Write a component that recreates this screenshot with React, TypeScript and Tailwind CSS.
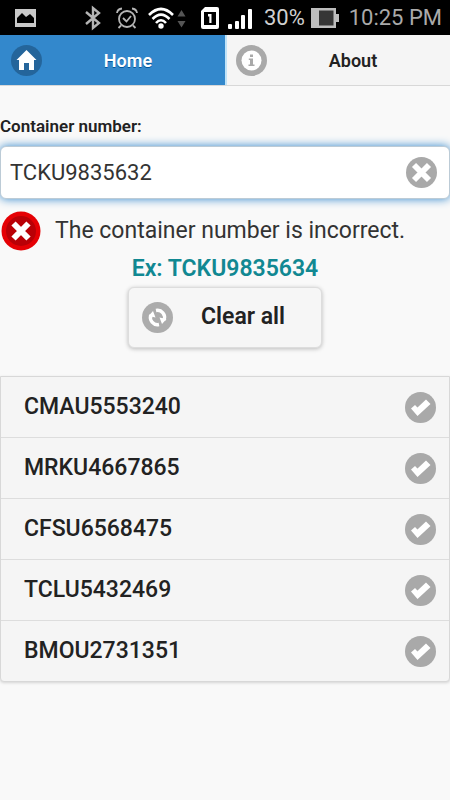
import React, { useState } from "react";

const containers = [
  "CMAU5553240",
  "MRKU4667865",
  "CFSU6568475",
  "TCLU5432469",
  "BMOU2731351",
];

function StatusBar() {
  return (
    <header className="flex h-[35px] items-center bg-black pl-[15px] pr-2 text-[#d0d0d0]">
      {/* Picture */}
      <svg viewBox="0 0 21 18" className="h-[18px] w-[21px]">
        <path d="M0 0h21v18H0z" fill="#c9c9c9" />
        <path d="M2 14V9l5-5 4 4 4-3 4 4v5z" fill="#000" />
      </svg>
      {/* Bluetooth */}
      <svg viewBox="0 0 16 26" className="ml-[49px] h-[26px] w-4" fill="none" stroke="#b5b5b5" strokeWidth="2.4">
        <path d="M1 7l13 11-6 5V3l6 5L1 19" />
      </svg>
      {/* Alarm */}
      <svg viewBox="0 0 22 22" className="ml-[15px] h-[22px] w-[22px]" fill="none" stroke="#b5b5b5" strokeWidth="1.8">
        <circle cx="11" cy="12" r="8" />
        <path d="M7 11l3.5 3.5L15 9M5 18.5l-2.5 2.5M17 18.5l2.5 2.5M1 6Q1.500 2 6 1.500M21 6Q20.500 2 16 1.500" />
      </svg>
      {/* Wi-Fi and traffic arrows */}
      <svg viewBox="0 0 38 22" className="ml-2.5 h-[22px] w-[38px]">
        <g fill="none" stroke="#fff" strokeWidth="2.600">
          <path d="M1 8Q13-4 25 8" />
          <path d="M4.500 12Q13 3.500 21.500 12" />
          <path d="M8 16Q13 10.500 18 16" />
        </g>
        <circle cx="13" cy="19" r="2.700" fill="#fff" />
        <path d="M29.500 9.500l4-6.500 4 6.500zM29.500 14l4 6.500 4-6.500z" fill="#555" />
      </svg>
      {/* SIM */}
      <svg viewBox="0 0 18 22" className="ml-[15px] h-[22px] w-[18px]">
        <path d="M4 0h12q2 0 2 2v18q0 2-2 2H2q-2 0-2-2V4z" fill="#fff" />
        <path d="M3 5h12v13H3z" fill="#000" />
        <path d="M7 7h3.500v9H8.300V9.500H7z" fill="#fff" />
      </svg>
      {/* Signal */}
      <svg viewBox="0 0 24 20" className="ml-[9px] mt-0.5 h-5 w-6" fill="#fff">
        <rect y="15" width="4" height="5" rx="1" />
        <rect x="7" y="12" width="4" height="8" rx="1" />
        <rect x="13" y="6" width="4" height="14" rx="1" />
        <rect x="20" width="4" height="20" rx="1" />
      </svg>
      <span className="ml-3 text-[22px] leading-none">30%</span>
      {/* Battery */}
      <svg viewBox="0 0 28 20" className="ml-1.5 h-5 w-7">
        <path d="M0 0h25v6h3v8h-3v6H0z" fill="#bdbdbd" />
        <path d="M8 2.500h14.500v15H8z" fill="#363636" />
      </svg>
      <time className="ml-auto whitespace-nowrap text-[22px] leading-none text-[#aaa]">10:25 PM</time>
    </header>
  );
}

function HomeIcon() {
  return (
    <svg viewBox="0 0 31 31" className="h-[31px] w-[31px]">
      <circle cx="15.500" cy="15.500" r="15.500" fill="#24659b" />
      <path d="M15.500 5L25.500 15H23v10h-5v-7h-5v7H8V15H5.500z" fill="#fff" />
    </svg>
  );
}

function InfoIcon() {
  return (
    <svg viewBox="0 0 31 31" className="h-[31px] w-[31px]">
      <circle cx="15.500" cy="15.500" r="15.500" fill="#a9a9a9" />
      <circle cx="15.500" cy="15.500" r="10" fill="#fff" />
      <path d="M14 9.500h3V12h-3zM12.800 13.500H17v6h1.500V21h-6v-1.500H14V15h-1.200z" fill="#a9a9a9" />
    </svg>
  );
}

function CrossIcon() {
  return (
    <svg viewBox="0 0 31 31" className="h-[31px] w-[31px]">
      <circle cx="15.500" cy="15.500" r="15.500" fill="#a9a9a9" />
      <path d="M8 8l15 15M23 8L8 23" stroke="#fff" strokeWidth="5.800" />
    </svg>
  );
}

function ErrorIcon() {
  return (
    <svg viewBox="0 0 40 40" className="h-10 w-10 shrink-0">
      <circle cx="20" cy="20" r="19.500" fill="#e50004" />
      <circle cx="20" cy="20" r="15" fill="#b90006" />
      <path d="M12.500 12.500l15 15M27.500 12.500l-15 15" stroke="#fff" strokeWidth="6" />
    </svg>
  );
}

function RefreshIcon() {
  return (
    <svg viewBox="0 0 31 31" className="h-[31px] w-[31px]">
      <circle cx="15.500" cy="15.500" r="15.500" fill="#acacac" />
      <g fill="none" stroke="#fff" strokeWidth="3.400">
        <path d="M14 8.500A7 7 0 0 1 22 18" />
        <path d="M17 22.500A7 7 0 0 1 9 13" />
      </g>
      <path d="M17.500 15.500l7 1.500-4.500 5zM13.500 15.500l-7-1.500 4.500-5z" fill="#fff" />
    </svg>
  );
}

function CheckIcon() {
  return (
    <svg viewBox="0 0 31 31" className="h-[31px] w-[31px]">
      <circle cx="15.500" cy="15.500" r="15.500" fill="#a9a9a9" />
      <path d="M6 16.500l4-3.500 2.500 2.500L21 7.500l4.500 4.500L12.500 24z" fill="#fff" />
    </svg>
  );
}

export default function App() {
  const [value, setValue] = useState("TCKU9835632");
  const [items, setItems] = useState(containers);

  const clearAll = () => {
    setValue("");
    setItems([]);
  };

  return (
    <div className="min-h-screen bg-[#f9f9f9] font-['Roboto','Liberation_Sans',sans-serif] text-[#222]">
      <StatusBar />

      <nav className="grid h-[51px] grid-cols-2 border-b border-[#d8d8d8] bg-[#f5f5f5] text-[18px] font-semibold">
        <a
          href="#home"
          className="flex items-center bg-[#3388cc] px-[11px] text-white [text-shadow:0_1px_0_#005599]"
        >
          <HomeIcon />
          <span className="flex-1 text-center">Home</span>
        </a>
        <a
          href="#about"
          className="flex items-center border-l-2 border-[#c0e3f8] pl-[9px] pr-[11px]"
        >
          <InfoIcon />
          <span className="flex-1 text-center">About</span>
        </a>
      </nav>

      <main className="pt-7">
        <label htmlFor="container" className="block text-[17px] font-semibold leading-6">
          Container number:
        </label>
        <div className="mt-2 flex h-[53px] items-center rounded-md border border-[#bccbd6] bg-white pl-[9px] pr-3 shadow-[0_0_10px_#3388cc]">
          <input
            id="container"
            type="text"
            value={value}
            onChange={(e) => setValue(e.target.value)}
            className="min-w-0 flex-1 bg-transparent text-[22px] text-[#333] outline-none"
          />
          <button type="button" aria-label="Clear text" onClick={() => setValue("")}>
            <CrossIcon />
          </button>
        </div>

        <div className="mt-3 flex items-center gap-[14px] pl-px">
          <ErrorIcon />
          <p className="whitespace-nowrap text-[23px] leading-7 text-[#333]">
            The container number is incorrect.
          </p>
        </div>
        <p className="mt-1 text-center text-[23px] font-semibold leading-7 text-[#118892]">
          Ex: TCKU9835634
        </p>

        <button
          type="button"
          onClick={clearAll}
          className="mx-auto mt-1 flex h-[61px] w-[194px] items-center gap-7 rounded-md border border-[#ddd] bg-[#f6f6f6] pl-[13px] text-[23px] font-semibold shadow-[0_1px_4px_#00000040]"
        >
          <RefreshIcon />
          Clear all
        </button>

        <ul className="mt-7 divide-y divide-[#ddd] rounded-b border border-[#d8d8d8] bg-[#f5f5f5] shadow-[0_1px_3px_#00000026]">
          {items.map((item) => (
            <li key={item}>
              <a href={"#" + item} className="flex h-[60px] items-center justify-between pl-[23px] pr-[13px] text-[23px] font-medium">
                {item}
                <CheckIcon />
              </a>
            </li>
          ))}
        </ul>
      </main>
    </div>
  );
}
